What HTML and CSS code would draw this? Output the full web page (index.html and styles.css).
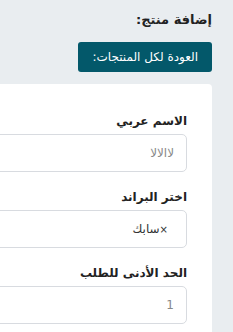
FILE: index.html
```html
<!DOCTYPE html>
<html lang="ar" dir="rtl">
<head>
<meta charset="UTF-8">
<meta name="viewport" content="width=device-width, initial-scale=1.0">
<title>إضافة منتج</title>
<link rel="stylesheet" href="styles.css">
</head>
<body>

<div class="page">
  <!-- العنوان -->
  <h1 class="page-title">إضافة منتج:</h1>
  <button class="btn-back">العودة لكل المنتجات:</button>

  <!-- النموذج -->
  <div class="card">
    <div class="field">
      <label class="field-label">الاسم عربي</label>
      <input class="field-input" type="text" value="لاالالا">
    </div>
    <div class="field">
      <label class="field-label">اختر البراند</label>
      <div class="field-input select-box"><span class="tag"><span class="tag-x">×</span>سابك</span></div>
    </div>
    <div class="field">
      <label class="field-label">الحد الأدنى للطلب</label>
      <input class="field-input" type="text" value="1">
    </div>
  </div>
</div>

</body>
</html>
```

FILE: styles.css
```css
/* الصفحة */
body {
  margin: 0;
  background-color: #e9edf0;
  font-family: "DejaVu Sans", sans-serif;
  overflow: hidden;
}

.page {
  padding: 11px 21px 0 0;
}

.page-title {
  margin: 0;
  font-size: 13px;
  font-weight: bold;
  color: #222;
  line-height: 18px;
}

/* زر العودة */
.btn-back {
  margin-top: 13px;
  height: 30px;
  padding: 0 14px;
  background-color: #03586a;
  color: #fff;
  border: none;
  border-radius: 3px;
  font-family: inherit;
  font-size: 12px;
}

/* البطاقة */
.card {
  margin-top: 12px;
  width: 400px;
  padding: 29px 25px 20px 0;
  background-color: #fff;
  border-radius: 4px;
}

.field {
  margin-bottom: 17px;
}

.field-label {
  display: block;
  margin-bottom: 5px;
  font-size: 12px;
  font-weight: bold;
  color: #222;
  line-height: 16px;
}

.field-input {
  box-sizing: border-box;
  display: block;
  width: 100%;
  height: 38px;
  padding: 0 12px;
  border: 1px solid #d8dbe0;
  border-radius: 5px;
  background: #fff;
  font-family: "DejaVu Sans", sans-serif;
  font-size: 12px;
  color: #888;
  direction: rtl;
}

.select-box {
  display: flex;
  align-items: center;
  padding-right: 18px;
}

.tag {
  color: #333;
}

.tag-x {
  font-size: 10px;
}
```
